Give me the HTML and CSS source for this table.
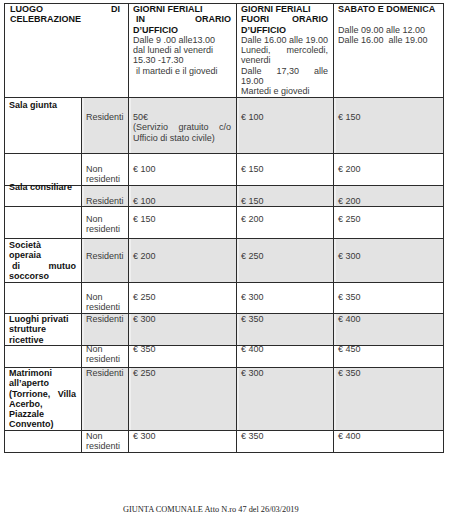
FILE: index.html
```html
<!DOCTYPE html>
<html lang="it">
<head>
<meta charset="utf-8">
<title>Tariffe celebrazione</title>
<link rel="stylesheet" href="styles.css">
</head>
<body>
<div class="tbl">
  <!-- header -->
  <div class="c h span2 b">
    <span class="l j">LUOGO DI</span>
    <span class="l">CELEBRAZIONE</span>
  </div>
  <div class="c h">
    <span class="l b">GIORNI FERIALI</span>
    <span class="l j b ind">IN ORARIO</span>
    <span class="l b">D’UFFICIO</span>
    <span class="l">Dalle 9 .00 alle13.00</span>
    <span class="l">dal lunedi al venerdi</span>
    <span class="l">15.30 -17.30</span>
    <span class="l ind">il martedi e il giovedi</span>
  </div>
  <div class="c h">
    <span class="l b">GIORNI FERIALI</span>
    <span class="l j b">FUORI ORARIO</span>
    <span class="l b">D’UFFICIO</span>
    <span class="l">Dalle 16.00 alle 19.00</span>
    <span class="l j">Lunedi, mercoledi,</span>
    <span class="l">venerdi</span>
    <span class="l j">Dalle 17,30 alle</span>
    <span class="l">19.00</span>
    <span class="l">Martedi e giovedi</span>
  </div>
  <div class="c h">
    <span class="l b">SABATO E DOMENICA</span>
    <span class="l">&nbsp;</span>
    <span class="l">Dalle 09.00 alle 12.00</span>
    <span class="l pre">Dalle 16.00  alle 19.00</span>
  </div>

  <!-- Sala giunta -->
  <div class="c b pa1"><span class="l">Sala giunta</span></div>
  <div class="c g pa2"><span class="l">Residenti</span></div>
  <div class="c g pa2">
    <span class="l">50€</span>
    <span class="l j">(Servizio gratuito c/o</span>
    <span class="l">Ufficio di stato civile)</span>
  </div>
  <div class="c g pa2"><span class="l">€ 100</span></div>
  <div class="c g pa2"><span class="l">€ 150</span></div>

  <div class="c"></div>
  <div class="c pb"><span class="l">Non</span><span class="l">residenti</span></div>
  <div class="c pb"><span class="l">€ 100</span></div>
  <div class="c pb"><span class="l">€ 150</span></div>
  <div class="c pb"><span class="l">€ 200</span></div>

  <!-- Sala consiliare -->
  <div class="c b"><span class="l up4">Sala consiliare</span></div>
  <div class="c g pc"><span class="l">Residenti</span></div>
  <div class="c g pc"><span class="l">€ 100</span></div>
  <div class="c g pc"><span class="l">€ 150</span></div>
  <div class="c g pc"><span class="l">€ 200</span></div>

  <div class="c"></div>
  <div class="c pd"><span class="l">Non</span><span class="l">residenti</span></div>
  <div class="c pd"><span class="l">€ 150</span></div>
  <div class="c pd"><span class="l">€ 200</span></div>
  <div class="c pd"><span class="l">€ 250</span></div>

  <!-- Società operaia -->
  <div class="c b pe1">
    <span class="l">Società</span>
    <span class="l">operaia</span>
    <span class="l j ind">di mutuo</span>
    <span class="l">soccorso</span>
  </div>
  <div class="c g pe2"><span class="l">Residenti</span></div>
  <div class="c g pe2"><span class="l">€ 200</span></div>
  <div class="c g pe2"><span class="l">€ 250</span></div>
  <div class="c g pe2"><span class="l">€ 300</span></div>

  <div class="c"></div>
  <div class="c pf"><span class="l">Non</span><span class="l">residenti</span></div>
  <div class="c pf"><span class="l">€ 250</span></div>
  <div class="c pf"><span class="l">€ 300</span></div>
  <div class="c pf"><span class="l">€ 350</span></div>

  <!-- Luoghi privati -->
  <div class="c b">
    <span class="l">Luoghi privati</span>
    <span class="l">strutture</span>
    <span class="l">ricettive</span>
  </div>
  <div class="c g"><span class="l">Residenti</span></div>
  <div class="c g"><span class="l">€ 300</span></div>
  <div class="c g"><span class="l">€ 350</span></div>
  <div class="c g"><span class="l">€ 400</span></div>

  <div class="c"></div>
  <div class="c"><span class="l up2">Non</span><span class="l">residenti</span></div>
  <div class="c"><span class="l up2">€ 350</span></div>
  <div class="c"><span class="l up2">€ 400</span></div>
  <div class="c"><span class="l up2">€ 450</span></div>

  <!-- Matrimoni all'aperto -->
  <div class="c b">
    <span class="l">Matrimoni</span>
    <span class="l">all’aperto</span>
    <span class="l j">(Torrione, Villa</span>
    <span class="l">Acerbo,</span>
    <span class="l">Piazzale</span>
    <span class="l">Convento)</span>
  </div>
  <div class="c g"><span class="l">Residenti</span></div>
  <div class="c g"><span class="l">€ 250</span></div>
  <div class="c g"><span class="l">€ 300</span></div>
  <div class="c g"><span class="l">€ 350</span></div>

  <div class="c"></div>
  <div class="c"><span class="l">Non</span><span class="l">residenti</span></div>
  <div class="c"><span class="l">€ 300</span></div>
  <div class="c"><span class="l">€ 350</span></div>
  <div class="c"><span class="l">€ 400</span></div>
</div>

<p class="footer">GIUNTA COMUNALE Atto N.ro 47 del 26/03/2019</p>
</body>
</html>
```

FILE: styles.css
```css
html, body {
  margin: 0;
  padding: 0;
  background: #ffffff;
}

body {
  width: 450px;
  height: 521px;
  overflow: hidden;
}

.tbl {
  display: grid;
  grid-template-columns: 76px 46px 107px 96px 109px;
  grid-template-rows: 93px 55px 31px 20px 31px 43px 30px 31px 21px 62px 21px;
  gap: 1px;
  padding: 1px;
  width: max-content;
  margin: 3px 0 0 4px;
  background: #2b2b2b;
  font-family: "Liberation Sans", Arial, sans-serif;
  font-size: 9px;
  line-height: 10.25px;
  color: #3a3a3a;
}

.c {
  background: #ffffff;
  padding: 0 5px 0 4px;
  overflow: visible;
  min-width: 0;
}

.c.g {
  background: #e3e3e3;
  box-shadow: inset 2px 0 0 #efefef;
}

.span2 {
  grid-column: span 2;
  padding-left: 5px;
  padding-right: 8px;
}

.b {
  font-weight: bold;
  color: #111111;
}

.l {
  display: block;
  white-space: nowrap;
}

.l.j {
  text-align: justify;
  text-align-last: justify;
  white-space: normal;
}

.pre {
  white-space: pre;
}

.ind {
  padding-left: 3px;
}

.up4 {
  margin-top: -4px;
}

.up2 {
  margin-top: -2px;
}

.pa1 { padding-top: 2px; }
.pa2 { padding-top: 14px; }
.pb { padding-top: 10px; }
.pc { padding-top: 10px; }
.pd { padding-top: 7px; }
.pe1 { padding-top: 1px; }
.pe2 { padding-top: 12px; }
.pf { padding-top: 9px; }

.footer {
  margin: 52px 0 0 123px;
  font-family: "Liberation Serif", "Times New Roman", serif;
  font-size: 8.3px;
  line-height: 10px;
  color: #222222;
}
```
